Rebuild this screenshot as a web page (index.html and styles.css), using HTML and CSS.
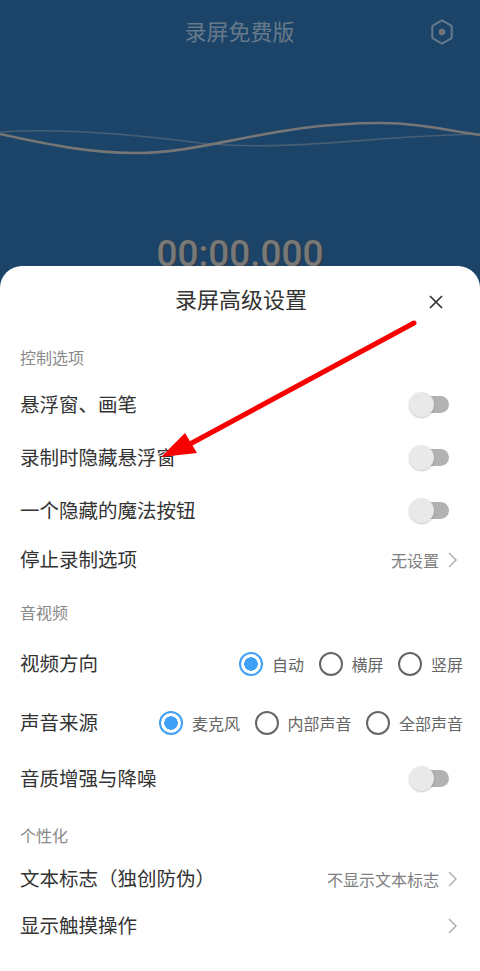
FILE: index.html
```html
<!DOCTYPE html>
<html lang="zh-CN">
<head>
<meta charset="utf-8">
<title>录屏高级设置</title>
<link rel="stylesheet" href="styles.css">
</head>
<body>
<div class="screen">
  <header class="hero">
    <div class="hero-bar">
      <span></span>
      <h1 class="hero-title">录屏免费版</h1>
      <svg class="gear" viewBox="0 0 22 26" width="22" height="26" aria-hidden="true">
        <path d="M11 1.3 20.7 6.9V19.1L11 24.7 1.3 19.1V6.9Z" fill="none" stroke="#66798a" stroke-width="2" stroke-linejoin="round"/>
        <circle cx="11" cy="13" r="2.6" fill="#7a6f68" stroke="#66798a" stroke-width="1.2"/>
      </svg>
    </div>
    <svg class="wave" viewBox="0 80 480 110" width="480" height="110" aria-hidden="true">
      <path d="M0 132C60 128 130 134 200 143C290 152 370 136 480 134" fill="none" stroke="#475f75" stroke-width="1.6"/>
      <path d="M0 134C50 145 90 153 135 153C210 153 270 123 380 123C420 123 450 131 480 135" fill="none" stroke="#767676" stroke-width="2.6"/>
    </svg>
    <div class="timer">00:00.000</div>
  </header>

  <main class="sheet">
    <div class="sheet-bar">
      <span></span>
      <h2 class="sheet-title">录屏高级设置</h2>
      <svg class="close" viewBox="0 0 14 14" width="14" height="14" aria-hidden="true">
        <path d="M1 1 13 13M13 1 1 13" stroke="#333" stroke-width="1.7" fill="none"/>
      </svg>
    </div>

    <div class="section section-first">控制选项</div>
    <div class="row row-switch"><span class="label">悬浮窗、画笔</span><span class="switch"><i class="thumb"></i></span></div>
    <div class="row row-switch"><span class="label">录制时隐藏悬浮窗</span><span class="switch"><i class="thumb"></i></span></div>
    <div class="row row-switch"><span class="label">一个隐藏的魔法按钮</span><span class="switch"><i class="thumb"></i></span></div>
    <div class="row row-link row-short">
      <span class="label">停止录制选项</span>
      <span class="value">无设置<svg class="chevron" viewBox="0 0 9 16" width="9" height="16" aria-hidden="true"><path d="M1 1 8 8 1 15" fill="none" stroke="#aaa" stroke-width="1.4"/></svg></span>
    </div>

    <div class="section section-av">音视频</div>
    <div class="row row-radio">
      <span class="label">视频方向</span>
      <div class="radios">
        <span class="radio on"><i class="dot"></i>自动</span>
        <span class="radio"><i class="dot"></i>横屏</span>
        <span class="radio"><i class="dot"></i>竖屏</span>
      </div>
    </div>
    <div class="row row-radio">
      <span class="label">声音来源</span>
      <div class="radios">
        <span class="radio on"><i class="dot"></i>麦克风</span>
        <span class="radio"><i class="dot"></i>内部声音</span>
        <span class="radio"><i class="dot"></i>全部声音</span>
      </div>
    </div>
    <div class="row row-switch"><span class="label">音质增强与降噪</span><span class="switch"><i class="thumb"></i></span></div>

    <div class="section section-me">个性化</div>
    <div class="row row-link">
      <span class="label">文本标志（独创防伪）</span>
      <span class="value">不显示文本标志<svg class="chevron" viewBox="0 0 9 16" width="9" height="16" aria-hidden="true"><path d="M1 1 8 8 1 15" fill="none" stroke="#aaa" stroke-width="1.4"/></svg></span>
    </div>
    <div class="row row-link">
      <span class="label">显示触摸操作</span>
      <span class="value"><svg class="chevron" viewBox="0 0 9 16" width="9" height="16" aria-hidden="true"><path d="M1 1 8 8 1 15" fill="none" stroke="#aaa" stroke-width="1.4"/></svg></span>
    </div>
  </main>

  <svg class="arrow" viewBox="0 0 480 971" width="480" height="971" aria-hidden="true">
    <path d="M414 323 190 444" fill="none" stroke="#f80000" stroke-width="5" stroke-linecap="round"/>
    <path d="M161 457 185 433 197 453Z" fill="#f80000"/>
  </svg>
</div>
</body>
</html>
```
FILE: styles.css
```css
* { box-sizing: border-box; margin: 0; padding: 0; }
html, body { width: 480px; height: 971px; overflow: hidden; background: #fff; }
body { font-family: "Noto Sans CJK SC", "Noto Sans", sans-serif; color: #333; }
i { display: block; font-style: normal; }

.screen { position: relative; width: 480px; height: 971px; display: flex; flex-direction: column; background: #1c4468; }

.hero { height: 266px; flex: none; display: flex; flex-direction: column; }
.hero-bar { height: 64px; flex: none; display: grid; grid-template-columns: 1fr auto 1fr; align-items: center; padding: 0 27px 0 26px; }
.hero-title { font-size: 22px; font-weight: 400; line-height: 30px; color: #66798a; margin-bottom: 4px; }
.gear { justify-self: end; }
.wave { display: block; margin-top: 16px; flex: none; }
.timer { margin-top: auto; height: 28px; line-height: 32px; text-align: center; font-family: Roboto, sans-serif; font-size: 37px; font-weight: 500; color: #787878; text-shadow: 1px 1px 0 #2d3640, 0 0 1px #2d3640; }

.sheet { position: relative; flex: 1; background: #fff; border-radius: 22px 22px 0 0; }
.sheet-bar { height: 70px; display: grid; grid-template-columns: 1fr auto 1fr; align-items: center; padding: 0 37px 0 39px; }
.sheet-title { font-size: 22px; font-weight: 400; line-height: 30px; color: #333; margin-bottom: 6px; }
.close { justify-self: end; margin-top: 2px; }

.section { font-size: 16px; line-height: 22px; color: #888; padding: 0 20px; }
.section-first { height: 42px; padding-top: 10px; }
.section-av { height: 52px; padding-top: 19px; }
.section-me { height: 50px; padding-top: 19px; }

.row { display: flex; align-items: center; justify-content: space-between; padding: 0 17px 0 20px; }
.row-switch { height: 53px; }
.row-link { height: 47px; }
.row-short { height: 45px; }
.row-radio { height: 59px; }
.label { font-size: 19.5px; line-height: 28px; color: #333; margin-bottom: 1px; }

.switch { position: relative; width: 40px; height: 17px; margin-right: 14px; background: linear-gradient(to right, #fff 30%, transparent 30%), #b2b2b2; border-radius: 0 9px 9px 0; }
.thumb { position: absolute; left: 0; top: -4px; width: 25px; height: 25px; border-radius: 50%; background: #e9e9e9; box-shadow: 0 1px 2px rgba(0,0,0,.22); }

.value { display: flex; align-items: center; gap: 9px; font-size: 16px; line-height: 22px; color: #808080; margin-right: 6px; }

.radios { display: flex; gap: 15px; }
.radio { display: flex; align-items: center; gap: 8.5px; font-size: 16px; line-height: 24px; color: #666; }
.dot { width: 24px; height: 24px; border-radius: 50%; border: 2.5px solid #666; flex: none; }
.radio.on .dot { border-color: #3fa0f5; background: radial-gradient(circle, #3fa0f5 0 6.5px, #fff 7px); }

.arrow { position: absolute; left: 0; top: 0; pointer-events: none; }
```
